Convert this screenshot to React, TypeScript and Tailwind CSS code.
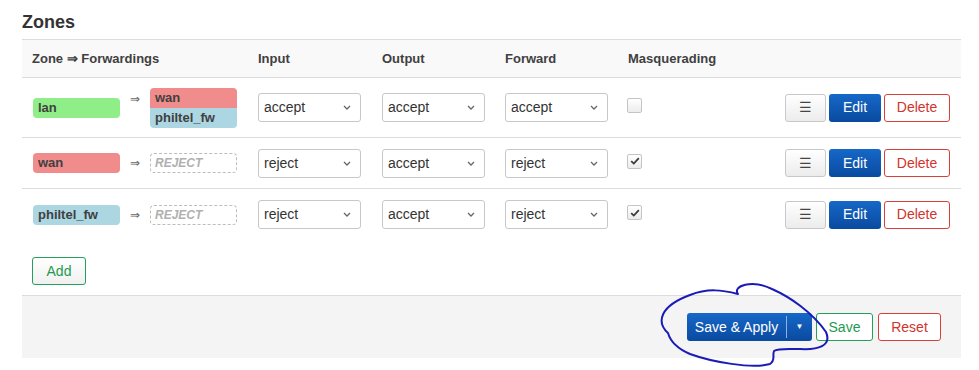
import React from 'react';

type Zone = {
  name: string;
  color: string;
  forwards: { name: string; color: string }[];
  input: string;
  output: string;
  forward: string;
  masq: boolean;
};

const zones: Zone[] = [
  {
    name: 'lan',
    color: 'bg-[#90ee88]',
    forwards: [
      { name: 'wan', color: 'bg-[#f08c8c]' },
      { name: 'philtel_fw', color: 'bg-[#acd6e2]' },
    ],
    input: 'accept',
    output: 'accept',
    forward: 'accept',
    masq: false,
  },
  { name: 'wan', color: 'bg-[#f08c8c]', forwards: [], input: 'reject', output: 'accept', forward: 'reject', masq: true },
  { name: 'philtel_fw', color: 'bg-[#acd6e2]', forwards: [], input: 'reject', output: 'accept', forward: 'reject', masq: true },
];

function Select({ value }: { value: string }) {
  return (
    <div className="relative w-[103px] h-[29px]">
      <select
        defaultValue={value}
        className="appearance-none w-full h-full border border-[#c8c8c8] rounded-[3px] bg-white pl-[5px] text-[14px] text-[#333] outline-none"
      >
        <option value="accept">accept</option>
        <option value="reject">reject</option>
        <option value="drop">drop</option>
      </select>
      <svg className="absolute right-[10px] top-[12px] pointer-events-none" width="8" height="5" viewBox="0 0 8 5">
        <path d="M1 1l3 3 3-3" fill="none" stroke="#666" strokeWidth="1.3" />
      </svg>
    </div>
  );
}

function Check({ checked }: { checked: boolean }) {
  return (
    <div className="w-[15px] h-[15px] border border-[#c4c4c4] rounded-[2px] bg-gradient-to-b from-white to-[#ececec] flex items-center justify-center">
      {checked && (
        <svg width="10" height="8" viewBox="0 0 10 8">
          <path d="M1.2 4.2l2.6 2.4L8.8 1.2" fill="none" stroke="#3a3a3a" strokeWidth="1.8" />
        </svg>
      )}
    </div>
  );
}

function Badge({ name, color, className = 'rounded-[4px]' }: { name: string; color: string; className?: string }) {
  return (
    <div className={`${color} ${className} w-[87px] h-[20px] px-[5px] text-[13px] font-bold leading-[19px] text-[#404040]`}>
      {name}
    </div>
  );
}

function ZoneRow({ z, last }: { z: Zone; last: boolean }) {
  return (
    <div
      className={`grid grid-cols-[226px_124px_123px_123px_1fr_auto] items-center ${
        z.forwards.length > 1 ? 'h-[60px]' : 'h-[51px]'
      } ${last ? '' : 'border-b border-[#dcdcdc]'}`}
    >
      <div className="flex items-center pl-[11px]">
        <Badge name={z.name} color={z.color} />
        <span className={`w-[30px] text-center text-[12px] text-[#666] ${z.forwards.length > 1 ? 'self-start mt-[2px]' : ''}`}>
          ⇒
        </span>
        {z.forwards.length ? (
          <div className="flex flex-col">
            {z.forwards.map((f, i) => (
              <Badge
                key={f.name}
                name={f.name}
                color={f.color}
                className={i === 0 ? 'rounded-t-[4px]' : 'rounded-b-[4px]'}
              />
            ))}
          </div>
        ) : (
          <div className="w-[87px] h-[20px] border border-dashed border-[#bdbdbd] rounded-[4px] pl-[4px] text-[12px] italic font-bold leading-[18px] text-[#b0b0b0]">
            REJECT
          </div>
        )}
      </div>
      <div className="pl-[10px]">
        <Select value={z.input} />
      </div>
      <div className="pl-[10px]">
        <Select value={z.output} />
      </div>
      <div className="pl-[10px]">
        <Select value={z.forward} />
      </div>
      <div className="pl-[9px] -mt-[4px]">
        <Check checked={z.masq} />
      </div>
      <div className="flex gap-[3px] pr-[11px]">
        <button className="w-[41px] h-[28px] border border-[#c8c8c8] rounded-[3px] bg-gradient-to-b from-white to-[#ececec] text-[14px] text-[#444]">
          ☰
        </button>
        <button className="w-[52px] h-[28px] rounded-[3px] bg-gradient-to-b from-[#1668c8] to-[#0a4aa0] text-[14px] text-white">
          Edit
        </button>
        <button className="w-[66px] h-[28px] border border-[#d9403a] rounded-[3px] bg-white text-[14px] text-[#d0342c]">
          Delete
        </button>
      </div>
    </div>
  );
}

export default function App() {
  return (
    <div className="relative w-[979px] h-[370px] bg-white font-['Liberation_Sans',Arial,sans-serif] text-[#404040] overflow-hidden">
      <h2 className="pl-[22px] pt-[9px] h-[39px] text-[18px] font-bold text-[#333]">Zones</h2>

      <div className="ml-[22px] w-[939px]">
        {/* Header */}
        <div className="grid grid-cols-[226px_124px_123px_123px_1fr_auto] h-[39px] items-center border-t border-b border-[#dcdcdc] bg-[#f9f9f9] text-[13px] font-bold text-[#404040]">
          <div className="pl-[10px]">Zone ⇒ Forwardings</div>
          <div className="pl-[10px]">Input</div>
          <div className="pl-[10px]">Output</div>
          <div className="pl-[10px]">Forward</div>
          <div className="pl-[10px]">Masquerading</div>
          <div />
        </div>

        {zones.map((z, i) => (
          <ZoneRow key={z.name} z={z} last={i === zones.length - 1} />
        ))}

        <div className="h-[55px] pl-[10px] pt-[17px]">
          <button className="w-[54px] h-[28px] border border-[#23a05a] rounded-[3px] bg-gradient-to-b from-white to-[#f0f0f0] text-[14px] text-[#1f9a50]">
            Add
          </button>
        </div>

        {/* Footer actions */}
        <div className="h-[63px] border-t border-[#dcdcdc] bg-[#f4f4f4] flex items-center justify-end pr-[20px]">
          <div className="flex h-[28px] rounded-[3px] bg-gradient-to-b from-[#1668c8] to-[#0a4aa0] text-white text-[14px]">
            <button className="w-[99px] h-full">Save &amp; Apply</button>
            <div className="w-px bg-[#8fb3e0] my-[3px]" />
            <button className="w-[25px] h-full text-[8px]">▼</button>
          </div>
          <button className="ml-[4px] w-[57px] h-[28px] border border-[#23a05a] rounded-[3px] bg-white text-[14px] text-[#1f9a50]">
            Save
          </button>
          <button className="ml-[5px] w-[63px] h-[28px] border border-[#d9403a] rounded-[3px] bg-white text-[14px] text-[#d0342c]">
            Reset
          </button>
        </div>
      </div>

      {/* hand-drawn annotation */}
      <svg className="absolute left-0 top-0 pointer-events-none" width="979" height="370" viewBox="0 0 979 370">
        <path
          d="M668 333 C656 322 660 306 690 295 C708 288 722 290 738 294 C732 286 752 279 772 289 C790 297 812 312 826 332 C832 346 818 350 800 349 C788 349 778 348 774 351 C772 356 776 360 770 364 C752 369 712 362 690 354 C676 348 670 340 668 333 Z"
          fill="none"
          stroke="#1a1ab8"
          strokeWidth="2"
          strokeLinejoin="round"
        />
      </svg>
    </div>
  );
}
